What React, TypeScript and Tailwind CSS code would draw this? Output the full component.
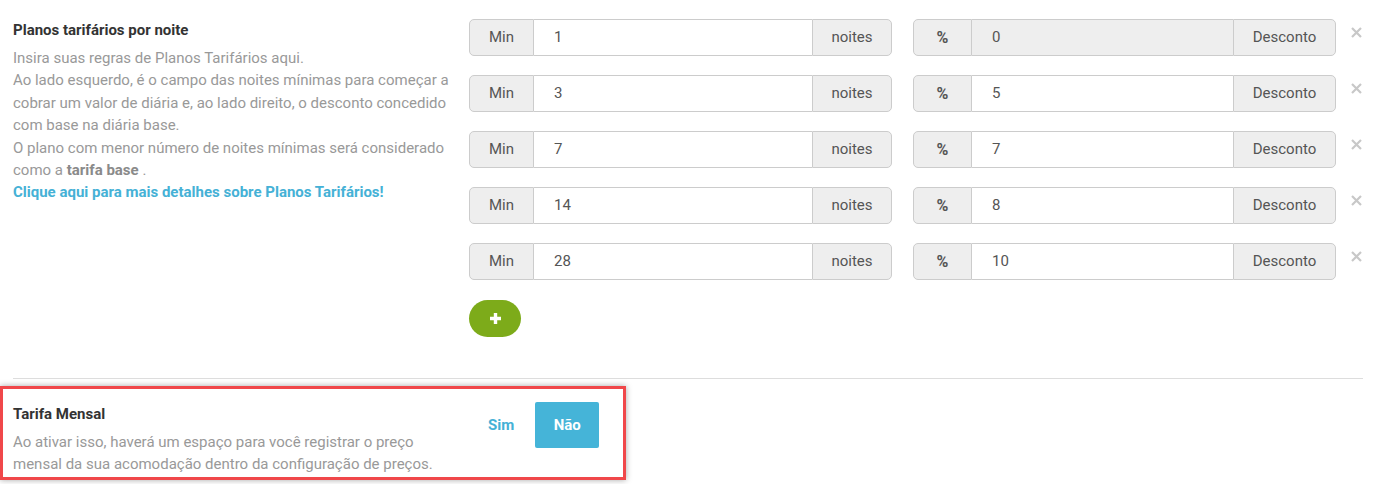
const rows = [
  { min: "1", pct: "0", locked: true },
  { min: "3", pct: "5" },
  { min: "7", pct: "7" },
  { min: "14", pct: "8" },
  { min: "28", pct: "10" },
];

function Addon({ children, w, side, bold }: { children: React.ReactNode; w: string; side: "l" | "r"; bold?: boolean }) {
  return (
    <div
      className={`${w} h-full flex items-center justify-center bg-[#eeeeee] border border-[#cccccc] text-[#555555] ${
        side === "l" ? "rounded-l-[5px]" : "rounded-r-[5px]"
      } ${bold ? "font-bold text-[16px]" : "text-[15px]"}`}
    >
      {children}
    </div>
  );
}

export default function App() {
  return (
    <div className="w-[1379px] h-[484px] bg-white overflow-hidden" style={{ fontFamily: "Roboto, 'Liberation Sans', sans-serif" }}>
      {/* planos tarifários */}
      <div className="flex pt-[19px]">
        <div className="w-[469px] pl-[13px] pr-[12px]">
          <h3 className="text-[15px] leading-[22px] font-bold text-[#333333]">Planos tarifários por noite</h3>
          <p className="mt-[6px] text-[15px] leading-[22.4px] text-[#999999]">
            Insira suas regras de Planos Tarifários aqui.
            <br />
            Ao lado esquerdo, é o campo das noites mínimas para começar a cobrar um valor de diária e, ao lado direito, o desconto concedido com base na diária base.
            <br />
            O plano com menor número de noites mínimas será considerado como a <b className="text-[#8a8a8a]">tarifa base</b> .
          </p>
          <a className="block text-[15px] leading-[22px] font-bold text-[#45b1d6]">Clique aqui para mais detalhes sobre Planos Tarifários!</a>
        </div>

        <div className="flex flex-col">
          <div className="flex flex-col gap-[19px]">
            {rows.map((r) => (
              <div key={r.min} className="flex items-start h-[37px]">
                <div className="flex w-[423px] h-full">
                  <Addon w="w-[65px]" side="l">Min</Addon>
                  <div className="flex-1 h-full flex items-center pl-[20px] border-y border-[#cccccc] bg-white text-[15px] text-[#555555]">{r.min}</div>
                  <Addon w="w-[80px]" side="r">noites</Addon>
                </div>
                <div className="flex w-[423px] h-full ml-[21px]">
                  <Addon w="w-[59px]" side="l" bold>%</Addon>
                  <div
                    className={`flex-1 h-full flex items-center pl-[20px] border-y border-[#cccccc] text-[15px] text-[#555555] ${
                      r.locked ? "bg-[#eeeeee]" : "bg-white"
                    }`}
                  >
                    {r.pct}
                  </div>
                  <Addon w="w-[103px]" side="r">Desconto</Addon>
                </div>
                <svg className="ml-[15px] mt-[8px]" width="11" height="11" viewBox="0 0 11 11">
                  <path d="M1 1l9 9M10 1l-9 9" stroke="#c8c8c8" strokeWidth="2.2" />
                </svg>
              </div>
            ))}
          </div>
          <button className="mt-[20px] w-[52px] h-[37px] rounded-full bg-[#7dab1a] flex items-center justify-center">
            <svg width="13" height="13" viewBox="0 0 13 13">
              <path d="M6.5 1v11M1 6.5h11" stroke="white" strokeWidth="3.4" />
            </svg>
          </button>
        </div>
      </div>

      <div className="ml-[13px] w-[1350px] mt-[41px] border-t border-[#dddddd]" />

      {/* tarifa mensal - destacada */}
      <div className="mt-[7px] w-[626px] h-[94px] border-[3px] border-[#f0474a] shadow-[0_0_6px_rgba(0,0,0,0.35)] flex">
        <div className="w-[468px] pl-[10px] pr-[10px] pt-[15px]">
          <h3 className="text-[15px] leading-[20px] font-bold text-[#333333]">Tarifa Mensal</h3>
          <p className="mt-[7px] text-[15px] leading-[22.4px] text-[#999999]">
            Ao ativar isso, haverá um espaço para você registrar o preço mensal da sua acomodação dentro da configuração de preços.
          </p>
        </div>
        <div className="flex items-start pt-[13px]">
          <button className="h-[46px] px-[17px] text-[15px] font-bold text-[#45b1d6]">Sim</button>
          <button className="ml-[4px] w-[64px] h-[46px] rounded-[2px] bg-[#45b4d8] text-[15px] font-bold text-white">Não</button>
        </div>
      </div>
    </div>
  );
}
